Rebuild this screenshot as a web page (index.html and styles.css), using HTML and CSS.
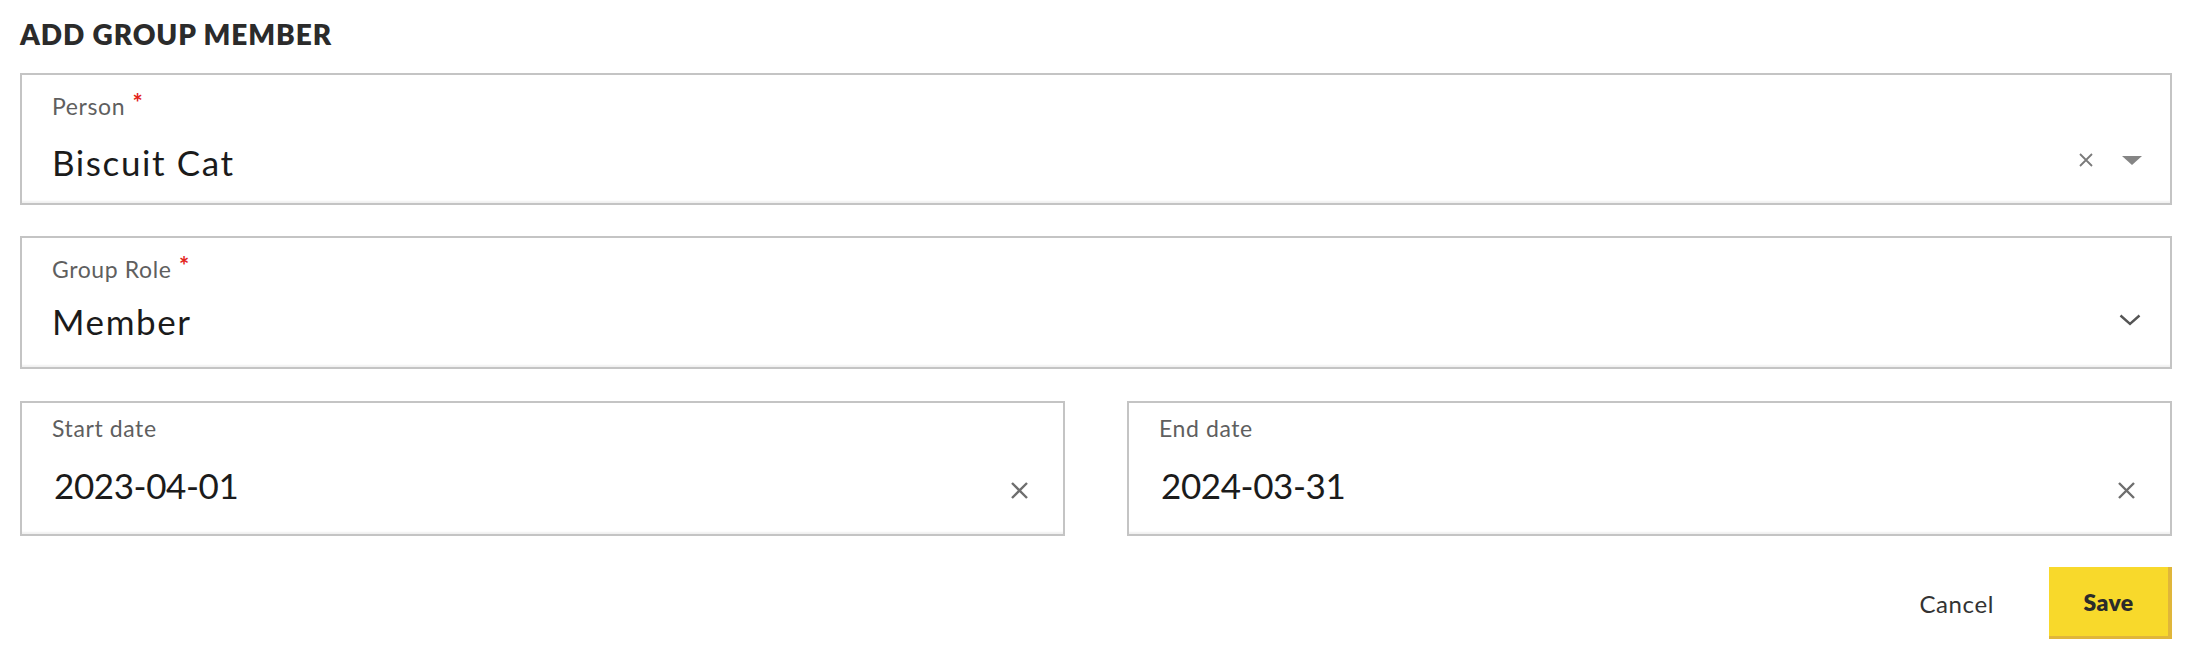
FILE: index.html
```html
<!DOCTYPE html>
<html lang="en">
<head>
<meta charset="utf-8">
<title>Add group member</title>
<link rel="stylesheet" href="styles.css">
</head>
<body>
<main class="form">
  <h1 class="title">Add group member</h1>

  <div class="field field--person">
    <div class="field-label">Person <span class="req">*</span></div>
    <div class="field-row">
      <div class="field-value field-value--spaced">Biscuit Cat</div>
      <div class="icons icons--person">
        <svg class="ico-clear-sm" width="14" height="14" viewBox="0 0 14 14" aria-hidden="true"><path d="M1 1L13 13M13 1L1 13" stroke="#7a7a7a" stroke-width="1.8" fill="none"/></svg>
        <svg class="ico-caret" width="20" height="9" viewBox="0 0 20 9" aria-hidden="true"><path d="M0 0H20L10 9Z" fill="#858585"/></svg>
      </div>
    </div>
  </div>

  <div class="field field--role">
    <div class="field-label">Group Role <span class="req">*</span></div>
    <div class="field-row">
      <div class="field-value field-value--spaced">Member</div>
      <svg class="ico-chevron" width="22" height="12" viewBox="0 0 22 12" aria-hidden="true"><path d="M1.5 1.5L11 10L20.5 1.5" stroke="#555" stroke-width="2.4" fill="none"/></svg>
    </div>
  </div>

  <div class="dates">
    <div class="field field--date">
      <div class="field-label">Start date</div>
      <div class="field-row">
        <div class="field-value field-value--date">2023-04-01</div>
        <svg class="ico-clear" width="19" height="19" viewBox="0 0 19 19" aria-hidden="true"><path d="M2 2L17 17M17 2L2 17" stroke="#6e6e6e" stroke-width="2.4" fill="none"/></svg>
      </div>
    </div>
    <div class="field field--date">
      <div class="field-label">End date</div>
      <div class="field-row">
        <div class="field-value field-value--date">2024-03-31</div>
        <svg class="ico-clear" width="19" height="19" viewBox="0 0 19 19" aria-hidden="true"><path d="M2 2L17 17M17 2L2 17" stroke="#6e6e6e" stroke-width="2.4" fill="none"/></svg>
      </div>
    </div>
  </div>

  <div class="actions">
    <button class="btn-cancel" type="button">Cancel</button>
    <button class="btn-save" type="button">Save</button>
  </div>
</main>
</body>
</html>
```

FILE: styles.css
```css
* { box-sizing: border-box; }

html, body {
  margin: 0;
  padding: 0;
  background: #ffffff;
}

body {
  font-family: "Lato", "Open Sans", "Liberation Sans", sans-serif;
  color: #1b1b1b;
}

.form {
  padding: 17px 22px 0 20px;
}

.title {
  margin: 0 0 22px 0;
  font-size: 28px;
  line-height: 34px;
  font-weight: 800;
  letter-spacing: 0.9px;
  text-transform: uppercase;
  color: #2b2b2b;
}

.field {
  border: 2px solid #c4c4c4;
  box-shadow: inset 0 -3px 2px -1px rgba(0, 0, 0, 0.06);
  background: #fff;
  padding-left: 30px;
  padding-right: 30px;
  display: flex;
  flex-direction: column;
}

.field-label {
  font-size: 23px;
  line-height: 28px;
  color: #5f5f5f;
  letter-spacing: 0.6px;
}

.req {
  color: #e3241b;
  font-size: 24px;
  font-weight: 700;
  vertical-align: 3px;
  margin-left: 1px;
}

.field-row {
  display: flex;
  align-items: center;
}

.field-value {
  flex: 1;
  font-size: 35px;
  line-height: 44px;
  color: #1b1b1b;
}

.field-value--spaced {
  letter-spacing: 1.6px;
}

.field-value--date {
  letter-spacing: -0.4px;
  padding-left: 2px;
}

.field--person {
  height: 132px;
  padding-top: 14px;
}
.field--person .field-row { margin-top: 20px; }

.field--role {
  height: 133px;
  margin-top: 31px;
  padding-top: 14px;
}
.field--role .field-row { margin-top: 16px; }

.dates {
  margin-top: 32px;
  display: grid;
  grid-template-columns: 1fr 1fr;
  column-gap: 62px;
}

.field--date {
  height: 135px;
  padding-top: 11px;
  padding-left: 30px;
  padding-right: 34px;
}
.field--date .field-row { margin-top: 21px; }

.icons {
  display: flex;
  align-items: center;
}

.icons--person {
  gap: 29px;
  margin-bottom: 4px;
  margin-right: -2px;
}

.ico-chevron {
  margin-right: -1px;
  margin-top: -2px;
}

.ico-clear {
  margin-top: 10px;
}

.actions {
  margin-top: 31px;
  display: flex;
  justify-content: flex-end;
  align-items: center;
}

.btn-cancel {
  font-family: inherit;
  background: none;
  border: none;
  padding: 0 28px;
  height: 72px;
  font-size: 24px;
  letter-spacing: 0.6px;
  color: #333;
  cursor: pointer;
  margin-right: 27px;
}

.btn-save {
  font-family: inherit;
  width: 123px;
  height: 72px;
  background: #f8d92b;
  border: none;
  border-right: 4px solid #e0b63a;
  border-bottom: 3px solid #e0b63a;
  font-size: 23px;
  font-weight: 800;
  letter-spacing: 0.4px;
  color: #2b2b2b;
  cursor: pointer;
  padding: 0;
}
```
